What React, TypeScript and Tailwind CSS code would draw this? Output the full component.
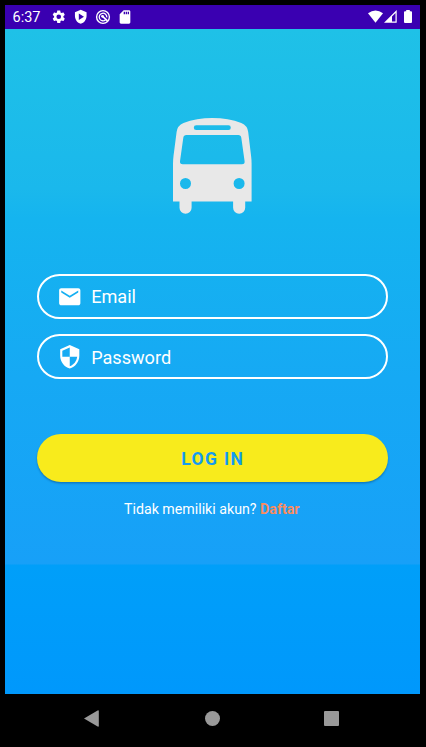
import React from "react";

const font = "font-['Roboto',sans-serif]";

function Glyph({ d, className }: { d: string; className: string }) {
  return (
    <svg viewBox="0 0 24 24" className={`shrink-0 ${className}`} fill="currentColor" fillRule="evenodd">
      <path d={d} />
    </svg>
  );
}

const GEAR =
  "M19.14 12.94c.04-.3.06-.61.06-.94s-.02-.64-.07-.94l2.03-1.58a.49.49 0 0 0 .12-.61l-1.92-3.32a.49.49 0 0 0-.59-.22l-2.39.96c-.5-.38-1.03-.7-1.62-.94l-.36-2.54a.48.48 0 0 0-.48-.41h-3.84c-.24 0-.43.17-.47.41l-.36 2.54c-.59.24-1.13.57-1.62.94l-2.39-.96a.48.48 0 0 0-.59.22L2.74 8.87c-.12.21-.08.47.12.61l2.03 1.58c-.05.3-.09.63-.09.94s.02.64.07.94l-2.03 1.58a.49.49 0 0 0-.12.61l1.92 3.32c.12.22.37.29.59.22l2.39-.96c.5.38 1.03.7 1.62.94l.36 2.54c.05.24.24.41.48.41h3.84c.24 0 .44-.17.47-.41l.36-2.54c.59-.24 1.13-.56 1.62-.94l2.39.96c.22.08.47 0 .59-.22l1.92-3.32a.48.48 0 0 0-.12-.61l-2.01-1.58zM12 15.6A3.6 3.6 0 1 1 12 8.4a3.6 3.6 0 0 1 0 7.2z";
const SHIELD_PLAY =
  "M12 1L3 5v6c0 5.55 3.84 10.74 9 12 5.16-1.26 9-6.45 9-12V5l-9-4zM9 7l8 5-8 5V7z";
const SD =
  "M18 2h-8L4 8v12c0 1.1.9 2 2 2h12c1.1 0 2-.9 2-2V4c0-1.1-.9-2-2-2zm-6 6h-2V4h2v4zm3 0h-2V4h2v4zm3 0h-2V4h2v4z";
const MAIL =
  "M20 4H4c-1.1 0-1.99.9-1.99 2L2 18c0 1.1.9 2 2 2h16c1.1 0 2-.9 2-2V6c0-1.1-.9-2-2-2zm0 4l-8 5-8-5V6l8 5 8-5v2z";
const SECURITY =
  "M12 1L3 5v6c0 5.55 3.84 10.74 9 12 5.16-1.26 9-6.45 9-12V5l-9-4zm0 10.99h7c-.53 4.12-3.28 7.79-7 8.94V12H5V6.3l7-3.11v8.8z";

function StatusBar() {
  return (
    <div className="flex h-6 items-center bg-[#3a00b1] pr-[8px] pl-[7.5px] text-white">
      <span className="w-[38px] pt-px text-[14.5px] leading-6">6:37</span>
      <div className="flex items-center pb-px">
        <Glyph d={GEAR} className="size-[15.5px]" />
        <Glyph d={SHIELD_PLAY} className="ml-[7px] size-[15.5px]" />
        <svg viewBox="0 0 16 16" className="ml-[6px] size-4 shrink-0" fill="none" stroke="currentColor">
          <circle cx="8" cy="8" r="6.4" strokeWidth="1.4" />
          <path d="M10.6 10.8A3.8 3.8 0 1 1 11.8 8.4" strokeWidth="1.3" />
          <path d="M7.4 7.2l5 4.6" strokeWidth="1.7" />
          <circle cx="7.5" cy="7.3" r="1.4" fill="currentColor" stroke="none" />
        </svg>
        <Glyph d={SD} className="ml-[6px] size-4" />
      </div>
      <svg viewBox="0 0 16 14" className="ml-auto h-3.5 w-4" fill="currentColor">
        <path d="M0 3.2Q7.5-2.4 15 3.2L7.5 12.8z" />
      </svg>
      <svg viewBox="0 0 14 14" className="h-3.5 w-3.5" fill="currentColor">
        <path fillRule="evenodd" d="M0 12.7L12.7 0V12.7zM8 6.4V11.5H11.5V2.9z" />
      </svg>
      <svg viewBox="0 0 8 14" className="ml-[6px] h-3.5 w-2" fill="currentColor">
        <path d="M2.2 0h3.6v1.3H7a1 1 0 0 1 1 1V12a1 1 0 0 1-1 1H1a1 1 0 0 1-1-1V2.3a1 1 0 0 1 1-1h1.2z" />
      </svg>
    </div>
  );
}

function Bus() {
  return (
    <svg viewBox="0 0 79 96" className="mt-[89px] ml-[168.3px] h-24 w-[79px]" fill="#e8e8e8">
      <path
        fillRule="evenodd"
        d="M0 83.5V46Q0 42 .5 38L3.6 14Q4.4 7.5 10.5 5C19 1.5 29 0 39.4 0S60 1.5 68.3 5Q74.4 7.5 75.2 14L78.1 38Q78.6 42 78.6 46V83.5H72.2V89.8A6 6 0 0 1 60.1 89.8V83.5H18.6V89.8A6 6 0 0 1 6.5 89.8V83.5ZM23.2 7.3A2.4 2.4 0 0 0 23.2 12.1H55.4A2.4 2.4 0 0 0 55.4 7.3ZM13.3 17Q10.7 17 10.3 19.7L7 43.2Q6.7 46.2 9.7 46.2H69Q72 46.2 71.6 43.2L68.3 19.7Q67.9 17 65.3 17ZM12.5 60A5.5 5.5 0 1 0 12.5 71A5.5 5.5 0 1 0 12.5 60ZM66.1 60A5.5 5.5 0 1 0 66.1 71A5.5 5.5 0 1 0 66.1 60Z"
      />
    </svg>
  );
}

function Field({ icon, label }: { icon: string; label: string }) {
  return (
    <div className="flex h-[44.5px] items-center rounded-full border-2 border-white pl-[17.5px] text-white">
      <Glyph d={icon} className="size-[25.5px]" />
      <span className="ml-[9.2px] pt-[2px] text-[18.1px] leading-6">{label}</span>
    </div>
  );
}

export default function App() {
  return (
    <div className={`flex h-[747px] w-[426px] flex-col bg-black pt-[5px] pr-[6px] pl-[5px] ${font}`}>
      <StatusBar />
      <main className="flex h-[665px] flex-col bg-[linear-gradient(180deg,#1fc1e7_0px,#1ab8ec_160px,#15b4ef_190px,#16a9f4_350px,#17a0f8_535px,#009ff9_536px,#0098fc_665px)]">
        <Bus />
        <div className="mt-[60px] mr-[32.5px] ml-[32px] flex flex-col gap-[15.8px]">
          <Field icon={MAIL} label="Email" />
          <Field icon={SECURITY} label="Password" />
        </div>
        <button className="mt-[55.2px] mr-[32.5px] ml-[32px] h-[48.3px] shrink-0 rounded-full bg-[#f8eb1c] pt-[1.5px] pl-px text-[17.5px] font-bold tracking-[1.35px] text-[#159bf0] shadow-[0_1.5px_2px_rgba(0,40,90,0.35)]">
          LOG IN
        </button>
        <p className="mt-[16.8px] ml-[119px] text-[14.2px] leading-5 whitespace-nowrap text-white">
          Tidak memiliki akun? <span className="font-bold text-[#fb8c60]">Daftar</span>
        </p>
      </main>
      <nav className="flex h-12 items-center pl-[79px]">
        <svg viewBox="0 0 15 17" className="h-[17px] w-[15px]" fill="#999">
          <path d="M0 8.5L13.6.4Q14.8 0 14.8 1V16Q14.8 17 13.6 16.6z" />
        </svg>
        <span className="ml-[105.5px] size-[15px] rounded-full bg-[#999]" />
        <span className="ml-[104.5px] size-[15px] rounded-[1px] bg-[#999]" />
      </nav>
    </div>
  );
}
